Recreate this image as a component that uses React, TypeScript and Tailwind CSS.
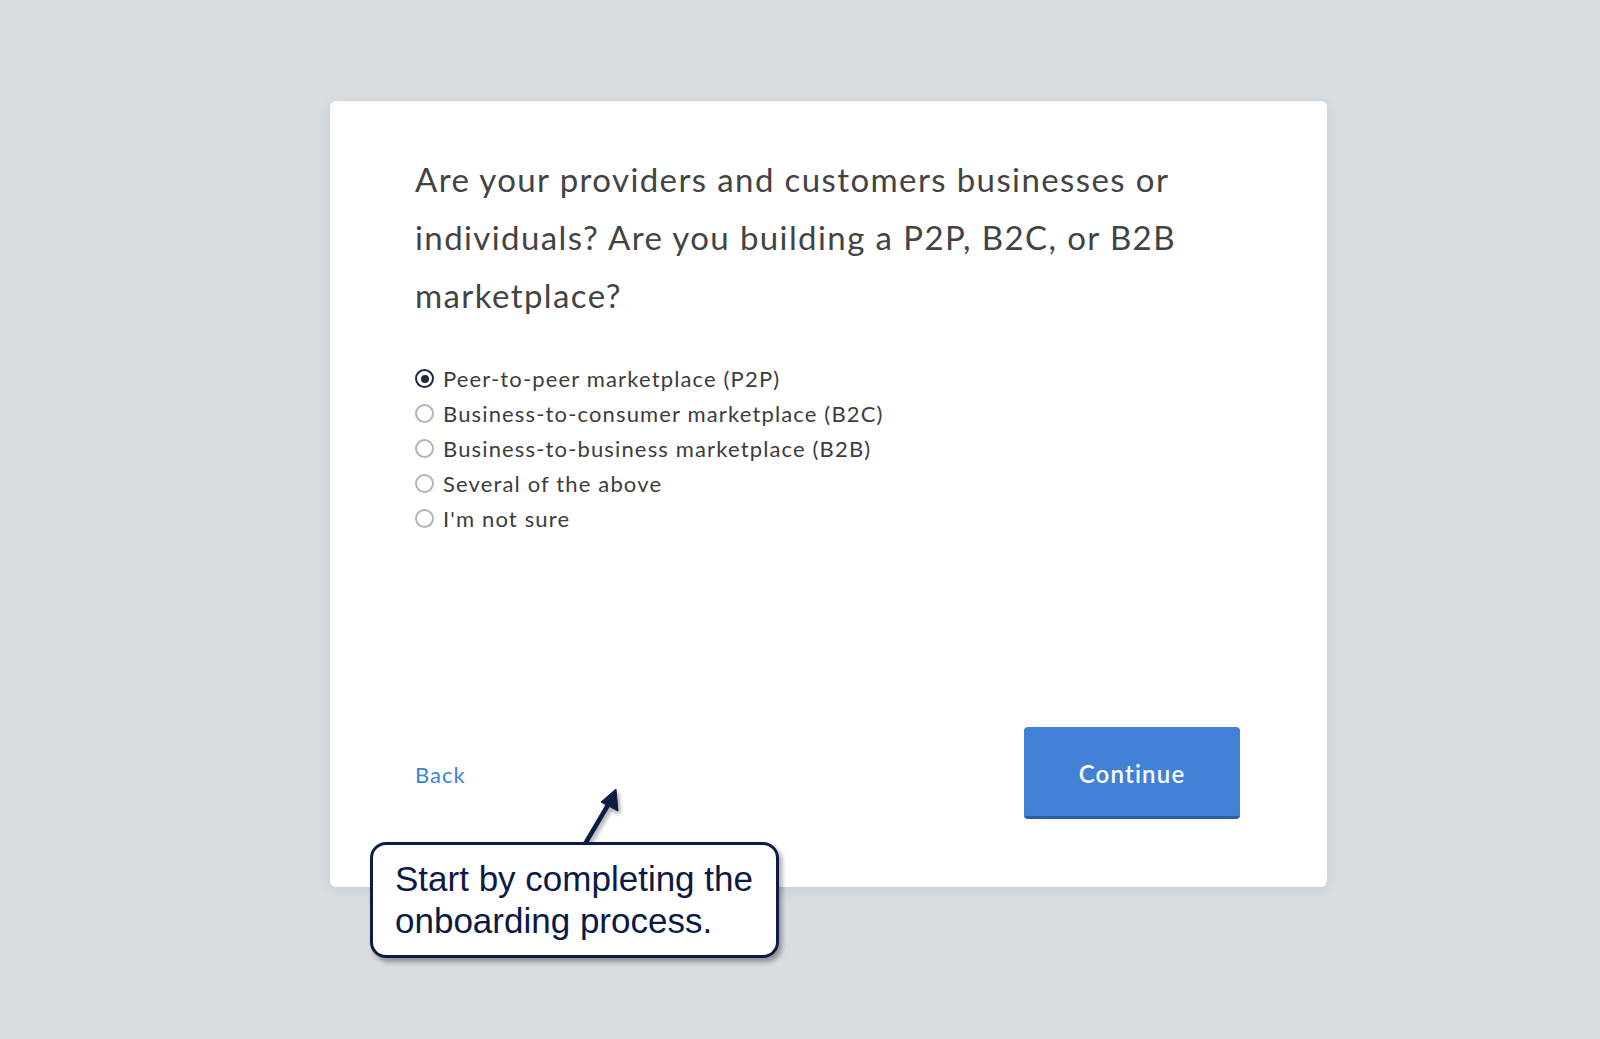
import { useState } from "react"

const options = [
  "Peer-to-peer marketplace (P2P)",
  "Business-to-consumer marketplace (B2C)",
  "Business-to-business marketplace (B2B)",
  "Several of the above",
  "I'm not sure",
]

function Radio({ checked }: { checked: boolean }) {
  return checked ? (
    <span className="flex h-[19px] w-[19px] shrink-0 items-center justify-center rounded-full border-[2.5px] border-[#1c2b3d]">
      <span className="h-[8px] w-[8px] rounded-full bg-[#1c2b3d]" />
    </span>
  ) : (
    <span className="h-[19px] w-[19px] shrink-0 rounded-full border-2 border-[#b4b4b4]" />
  )
}

export default function App() {
  const [selected, setSelected] = useState(0)

  return (
    <div className="relative min-h-[1039px] w-full bg-[#d8dde1] pt-[101px] pl-[330px] font-['Lato','Noto_Sans',sans-serif]">
      <div className="flex h-[786px] w-[997px] flex-col rounded-md bg-white pt-[49px] pr-[87px] pb-[68px] pl-[85px] shadow-[0_3px_14px_rgba(0,0,0,0.08)]">
        <h1 className="text-[33px] leading-[58px] font-normal tracking-[1.4px] text-[#434343]">
          Are your providers and customers businesses or
          <br />
          individuals? Are you building a P2P, B2C, or B2B
          <br />
          marketplace?
        </h1>

        <div className="mt-[37px] flex flex-col">
          {options.map((label, i) => (
            <label
              key={label}
              className="flex h-[35px] cursor-pointer items-center gap-[9px] text-[22px] text-[#3c3c3c]"
              onClick={() => setSelected(i)}
            >
              <Radio checked={selected === i} />
              <span className="tracking-[1.15px]">{label}</span>
            </label>
          ))}
        </div>

        <div className="flex-1" />

        <div className="flex items-center justify-between">
          <a className="pt-[2px] text-[22px] tracking-[1px] text-[#3a83d8]">Back</a>
          <button className="h-[92px] w-[216px] rounded-[4px] border-b-[3px] border-[#275ea6] bg-[#4181d6] pt-[4px] text-[24px] font-semibold tracking-[1.2px] text-white">
            Continue
          </button>
        </div>
      </div>

      {/* callout annotation over the card */}
      <svg
        className="absolute top-[780px] left-[575px]"
        width="60"
        height="70"
        viewBox="0 0 60 70"
      >
        <defs>
          <filter id="sh" x="-50%" y="-50%" width="200%" height="200%">
            <feDropShadow dx="2" dy="3" stdDeviation="2" floodColor="#000" floodOpacity="0.35" />
          </filter>
        </defs>
        <g filter="url(#sh)" fill="#0e1c45" stroke="#0e1c45">
          <line x1="10" y1="64" x2="36" y2="20" strokeWidth="4.5" />
          <polygon points="41,9 43,31 26,22" strokeWidth="1" strokeLinejoin="round" />
        </g>
      </svg>

      <div className="absolute top-[842px] left-[370px] w-[409px] rounded-[16px] border-[3.5px] border-[#0e1c45] bg-white px-[22px] pt-[13px] pb-[13px] shadow-[3px_4px_5px_rgba(0,0,0,0.35)]">
        <p className="font-['Liberation_Sans',Arial,sans-serif] text-[35px] leading-[42px] text-[#0b1a45]">
          Start by completing the
          <br />
          onboarding process.
        </p>
      </div>
    </div>
  )
}
